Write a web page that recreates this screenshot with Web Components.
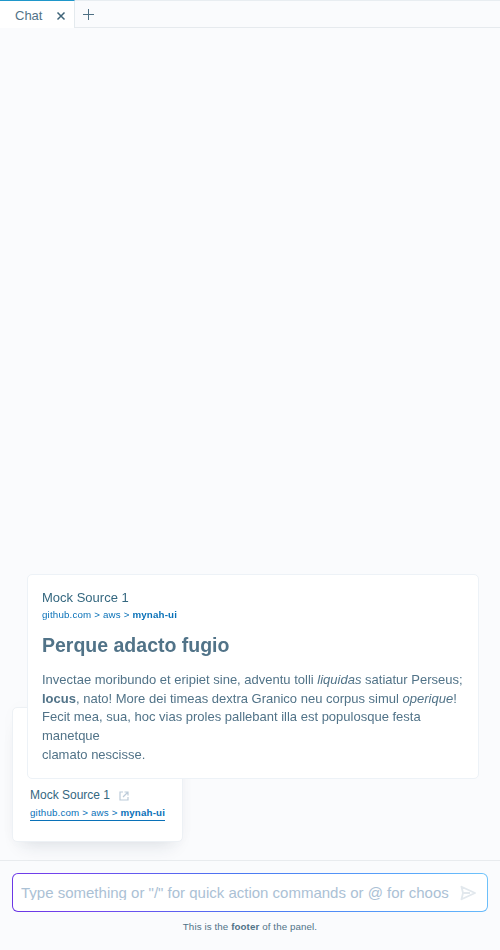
<!DOCTYPE html>
<html lang="en"><head><meta charset="utf-8"><title>Chat</title>
<style>
html,body{margin:0;height:100%}
body{background:#fafbfd;color:#517388;font:13px/18.7px "Liberation Sans",Arial,sans-serif;overflow:hidden}
</style></head><body>
<chat-app></chat-app>
<script>
const define=(name,html)=>{
  const t=document.createElement('template');
  t.innerHTML=html;
  customElements.define(name,class extends HTMLElement{
    constructor(){super();this.attachShadow({mode:'open'}).append(t.content.cloneNode(true));}
  });
};

define('tab-bar',`<style>
:host{display:flex;height:28px;box-sizing:border-box;flex:none}
.tab{box-sizing:border-box;width:75px;height:28px;background:#fff;border-top:1px solid #1f97ca;border-right:1px solid #e4eaee;display:flex;align-items:center;padding:3px 8px 0 15px;justify-content:space-between}
.rest{flex:1;box-sizing:border-box;border-top:1px solid #e8edf1;border-bottom:1px solid #e6eaee;padding:7px 0 0 7px}
svg{display:block}
.tab svg{margin-top:-1px}
</style>
<div class="tab"><slot></slot><svg width="10" height="10" viewBox="0 0 10 10" fill="none" stroke="#3f6479" stroke-width="1.5"><path d="M1.500 1.500l7 7M8.500 1.500l-7 7"/></svg></div>
<div class="rest"><svg width="13" height="13" viewBox="0 0 13 13" fill="none" stroke="#4e7084" stroke-width="1"><path d="M6.500 1v11M1 6.500h11"/></svg></div>`);

define('source-link',`<style>
:host{display:block}
.title{display:flex;align-items:center;color:#34677f;font-size:var(--title-size,13px);line-height:18px}
.url{display:inline-block;vertical-align:top;font-size:9.75px;letter-spacing:.165px;line-height:14px;color:#0971b8;border-bottom:var(--url-line,0);white-space:nowrap;margin-top:var(--url-gap,1px)}
b{color:#0971b8}
</style>
<div class="title"><slot></slot><slot name="icon"></slot></div>
<div class="url">github.com &gt; aws &gt; <b>mynah-ui</b></div>`);

define('open-icon',`<style>:host{display:block;margin:2px 0 0 9px}svg{display:block}</style>
<svg width="10" height="10" viewBox="0 0 10 10" fill="none" stroke="#bccbd9" stroke-width="1.2"><path d="M4 1H1v8h8V6M5.500 1H9v3.500M9 1L4 6"/></svg>`);

define('source-card',`<style>
:host{position:absolute;left:12px;top:707px;width:171px;height:135px;box-sizing:border-box;background:#fff;border:1px solid #edf1f5;border-radius:5px;box-shadow:0 12px 18px -10px rgba(30,50,70,.14),0 0 18px rgba(30,50,70,.02);padding:78px 17px 0;--title-size:12px;--url-line:1px solid #0971b8;--url-gap:2px}
</style><source-link>Mock Source 1<open-icon slot="icon"></open-icon></source-link>`);

define('source-preview',`<style>
:host{position:absolute;left:27px;top:574px;width:452px;height:205px;box-sizing:border-box;background:#fff;border:1px solid #edf2f7;border-radius:5px;padding:13px 10px 0 14px}
.body{transform:translateY(.5px);will-change:transform}
h1{font-size:19.5px;line-height:24px;margin:7px 0 14.200px}
p{margin:0;line-height:18.8px;white-space:nowrap}
</style><div class="body"><source-link>Mock Source 1</source-link>
<h1>Perque adacto fugio</h1>
<p>Invectae moribundo et eripiet sine, adventu tolli <em>liquidas</em> satiatur Perseus;<br><b>locus</b>, nato! More dei timeas dextra Granico neu corpus simul <em>operique</em>!<br>Fecit mea, sua, hoc vias proles pallebant illa est populosque festa<br>manetque<br>clamato nescisse.</p></div>`);

define('chat-prompt',`<style>
:host{display:flex;box-sizing:border-box;height:39px;border-radius:6px;padding:1px;background:linear-gradient(60deg,#6a35e4 0%,#7345ee 15%,#4a78f2 50%,#5aa8fb 85%,#70c4fa 100%)}
.in{flex:1;display:flex;align-items:center;background:#fff;border-radius:5px;padding:0 11px 0 8px;justify-content:space-between;min-width:0}
.hint{font-size:15px;line-height:15px;height:15px;overflow:hidden;white-space:nowrap;color:#abc1d5;margin-top:-1px}
svg{display:block}
</style><div class="in"><div class="hint"><slot></slot></div>
<svg width="16" height="16" viewBox="0 0 16 16" fill="none" stroke="#e2e8ed" stroke-width="1.800" stroke-linejoin="round"><path d="M1.500 1.700L15 8 1.500 14.300 3 8zM3 8h7"/></svg></div>`);

define('chat-app',`<style>
:host{display:flex;flex-direction:column;position:relative;width:500px;height:950px;overflow:hidden}
main{flex:1}
footer{height:90px;box-sizing:border-box;border-top:1px solid #e8ebee;padding:12px 12px 0}
.note{text-align:center;font-size:9.75px;letter-spacing:.1px;line-height:12px;margin-top:9px}
</style><tab-bar>Chat</tab-bar><main></main>
<footer><chat-prompt>Type something or "/" for quick action commands or @ for choos</chat-prompt><div class="note">This is the <b>footer</b> of the panel.</div></footer>
<source-card></source-card><source-preview></source-preview>`);
</script></body></html>
